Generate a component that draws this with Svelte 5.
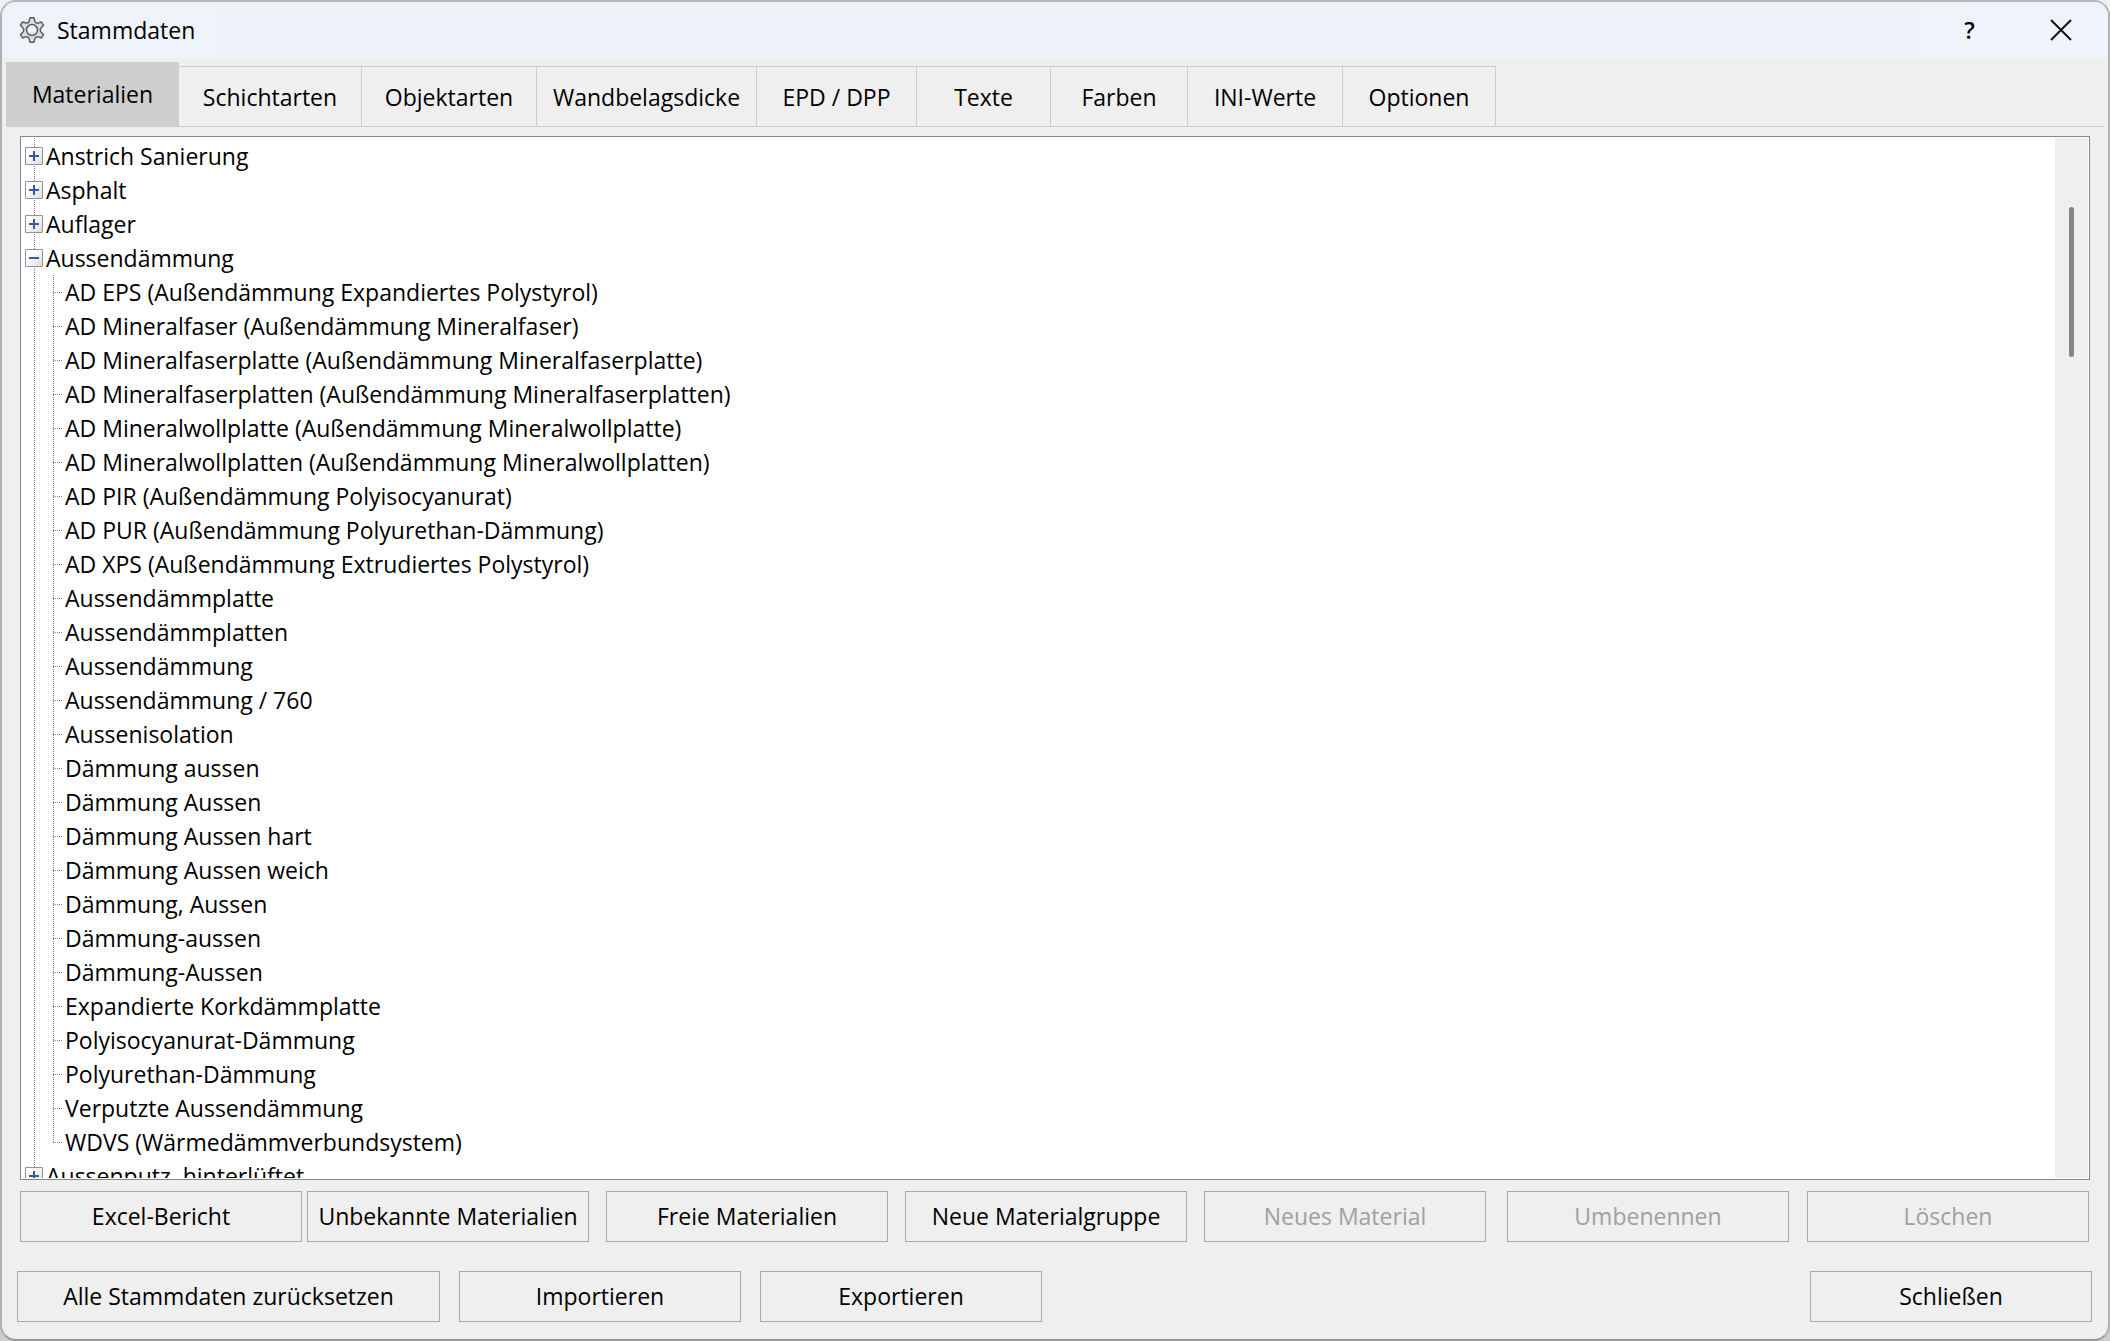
<script lang="ts">
    type Group = {
        name: string;
        open: boolean;
        items: string[];
    };

    type Action = {
        label: string;
        disabled?: boolean;
    };

    const tabs = [
        'Materialien',
        'Schichtarten',
        'Objektarten',
        'Wandbelagsdicke',
        'EPD / DPP',
        'Texte',
        'Farben',
        'INI-Werte',
        'Optionen',
    ];

    let activeTab = $state('Materialien');

    let groups = $state<Group[]>([
        { name: 'Anstrich Sanierung', open: false, items: [] },
        { name: 'Asphalt', open: false, items: [] },
        { name: 'Auflager', open: false, items: [] },
        {
            name: 'Aussendämmung',
            open: true,
            items: [
                'AD EPS (Außendämmung Expandiertes Polystyrol)',
                'AD Mineralfaser (Außendämmung Mineralfaser)',
                'AD Mineralfaserplatte (Außendämmung Mineralfaserplatte)',
                'AD Mineralfaserplatten (Außendämmung Mineralfaserplatten)',
                'AD Mineralwollplatte (Außendämmung Mineralwollplatte)',
                'AD Mineralwollplatten (Außendämmung Mineralwollplatten)',
                'AD PIR (Außendämmung Polyisocyanurat)',
                'AD PUR (Außendämmung Polyurethan-Dämmung)',
                'AD XPS (Außendämmung Extrudiertes Polystyrol)',
                'Aussendämmplatte',
                'Aussendämmplatten',
                'Aussendämmung',
                'Aussendämmung / 760',
                'Aussenisolation',
                'Dämmung aussen',
                'Dämmung Aussen',
                'Dämmung Aussen hart',
                'Dämmung Aussen weich',
                'Dämmung, Aussen',
                'Dämmung-aussen',
                'Dämmung-Aussen',
                'Expandierte Korkdämmplatte',
                'Polyisocyanurat-Dämmung',
                'Polyurethan-Dämmung',
                'Verputzte Aussendämmung',
                'WDVS (Wärmedämmverbundsystem)',
            ],
        },
        { name: 'Aussenputz, hinterlüftet', open: false, items: [] },
    ]);

    // Buttons that belong together share one cluster
    const materialActions: Action[][] = [
        [{ label: 'Excel-Bericht' }, { label: 'Unbekannte Materialien' }],
        [{ label: 'Freie Materialien' }],
        [{ label: 'Neue Materialgruppe' }],
        [{ label: 'Neues Material', disabled: true }],
        [{ label: 'Umbenennen', disabled: true }, { label: 'Löschen', disabled: true }],
    ];
</script>

<div class="window">
    <header>
        <svg class="gear" viewBox="0 0 26 26" aria-hidden="true">
            <path d="M11 .8h4l.9 3.600q.2.800 1 1.200l.6.350q.7.400 1.500.2l3.500-1.100 2 3.500-2.600 2.500q-.6.600-.6 1.400v1.100q0 .8.600 1.400l2.600 2.500-2 3.500-3.500-1.100q-.8-.2-1.500.2l-.6.350q-.8.400-1 1.200l-.9 3.600h-4l-.9-3.600q-.2-.8-1-1.200l-.6-.35q-.7-.4-1.500-.2l-3.500 1.100-2-3.500 2.600-2.500q.6-.6.600-1.400v-1.100q0-.8-.6-1.400L1.500 8.450l2-3.500L7 6.050q.8.200 1.500-.2l.6-.35q.8-.4 1-1.200z" />
            <circle cx="13" cy="13" r="5.500" />
        </svg>
        <h1>Stammdaten</h1>
        <button class="caption" aria-label="Hilfe">?</button>
        <button class="caption" aria-label="Fenster schließen">
            <svg viewBox="0 0 22 22" aria-hidden="true"><path d="M1 1l20 20M21 1L1 21" /></svg>
        </button>
    </header>

    <div class="tabs" role="tablist">
        {#each tabs as tab}
            <button
                role="tab"
                class:active={tab === activeTab}
                aria-selected={tab === activeTab}
                onclick={() => (activeTab = tab)}
            >{tab}</button>
        {/each}
    </div>

    <main>
        <div class="tree-frame">
            <ul class="tree">
                {#each groups as group}
                    <li>
                        <div class="row">
                            <button
                                class="toggle"
                                aria-label={group.name}
                                aria-expanded={group.open}
                                onclick={() => (group.open = !group.open)}
                            >
                                <svg viewBox="0 0 18 18" aria-hidden="true">
                                    <path d={group.open ? 'M4 9h10' : 'M4 9h10M9 4v10'} />
                                </svg>
                            </button>
                            <span>{group.name}</span>
                        </div>
                        {#if group.open}
                            <ul class="items">
                                {#each group.items as item}
                                    <li>{item}</li>
                                {/each}
                            </ul>
                        {/if}
                    </li>
                {/each}
            </ul>
            <div class="scrollbar"><div class="thumb"></div></div>
        </div>

        <div class="actions">
            {#each materialActions as cluster}
                <div class="cluster">
                    {#each cluster as action}
                        <button class="push" disabled={action.disabled}>{action.label}</button>
                    {/each}
                </div>
            {/each}
        </div>
    </main>

    <footer>
        <button class="push wide">Alle Stammdaten zurücksetzen</button>
        <button class="push">Importieren</button>
        <button class="push">Exportieren</button>
        <button class="push close">Schließen</button>
    </footer>
</div>

<style>
    :global(body) {
        background: linear-gradient(#f0f0f0, #cccccc);
    }

    .window {
        box-sizing: border-box;
        display: flex;
        flex-direction: column;
        height: 100vh;
        border: 2px solid;
        border-color: #b8b8b8 #b0b0b0 #999999;
        border-radius: 16px;
        overflow: hidden;
        background: #efefef;
        color: #000;
        font: 23px "Open Sans", "Noto Sans", sans-serif;
    }

    button {
        box-sizing: border-box;
        padding: 0;
        border: none;
        background: none;
        color: inherit;
        font: inherit;
    }

    ul {
        margin: 0;
        padding: 0;
        list-style: none;
    }

    header {
        display: flex;
        align-items: center;
        height: 56px;
        padding: 0 2px 0 17px;
        background: linear-gradient(90deg, #eff3fb, #edf3f8 25%, #edf3f8 85%, #eff3fb 95%);
    }

    h1 {
        flex: 1;
        margin: 0 0 0 12px;
        font-size: 23px;
        font-weight: normal;
    }

    .gear {
        width: 26px;
        height: 26px;
        fill: #dcdcdc;
        stroke: #5c5c5c;
        stroke-width: 1.5;
        stroke-linejoin: round;
    }

    .gear circle {
        fill: #eff3fb;
    }

    .caption {
        display: flex;
        align-items: center;
        justify-content: center;
        width: 91px;
        height: 56px;
        font-weight: 600;
    }

    .caption svg {
        width: 22px;
        height: 22px;
        fill: none;
        stroke: #111;
        stroke-width: 2;
    }

    .tabs {
        display: grid;
        grid-template-columns: 173px 183px 175px 220px 160px 134px 137px 155px 153px;
        align-items: end;
        margin: 4px 4px 0;
        border-bottom: 1px solid #cccccc;
    }

    .tabs button {
        height: 60px;
        border: solid #cccccc;
        border-width: 1px 1px 0 0;
    }

    .tabs .active {
        height: 64px;
        border: none;
        background: #cecece;
    }

    main {
        display: flex;
        flex: 1;
        flex-direction: column;
        min-height: 0;
        padding: 9px 18px 0;
    }

    .tree-frame {
        display: flex;
        flex: 1;
        min-height: 0;
        padding: 1px;
        border: 1px solid #828790;
        background: #fff;
    }

    .tree {
        flex: 1;
        padding-top: 1px;
        overflow: hidden;
        line-height: 34px;
        white-space: nowrap;
        /* dotted guide line that runs through the toggles */
        background: repeating-linear-gradient(#808080 0 1px, transparent 1px 2px) 12px 0 / 1px 100% no-repeat;
    }

    .row {
        display: flex;
        align-items: center;
        gap: 3px;
        height: 34px;
        padding-left: 3px;
    }

    .toggle {
        width: 18px;
        height: 18px;
        border: 1px solid #919191;
        border-radius: 1px;
        background: linear-gradient(135deg, #ffffff 30%, #dcdcdc);
    }

    .toggle svg {
        display: block;
        width: 18px;
        height: 18px;
        margin: -1px;
        fill: none;
        stroke: #3a56a0;
        stroke-width: 2;
    }

    .items {
        margin-left: 31px;
    }

    .items li {
        height: 34px;
        padding-left: 12px;
        background:
            repeating-linear-gradient(#808080 0 1px, transparent 1px 2px) 0 0 / 1px 100% no-repeat,
            repeating-linear-gradient(90deg, #808080 0 1px, transparent 1px 2px) 0 17px / 9px 1px no-repeat;
    }

    .items li:last-child {
        background-size: 1px 17px, 9px 1px;
    }

    .scrollbar {
        width: 33px;
        padding-top: 69px;
        background: #efefef;
    }

    .thumb {
        width: 5px;
        height: 150px;
        margin-left: 14px;
        border-radius: 3px;
        background: #858585;
    }

    .actions {
        display: flex;
        gap: 17px;
        padding: 11px 1px 0 0;
    }

    .cluster {
        display: flex;
        gap: 5px;
    }

    .cluster:last-child {
        gap: 18px;
        margin-left: auto;
    }

    .push {
        width: 282px;
        height: 51px;
        padding-bottom: 2px;
        border: 1px solid #a9a9a9;
        white-space: nowrap;
    }

    .push:disabled {
        color: #a0a0a0;
    }

    footer {
        display: flex;
        gap: 19px;
        padding: 29px 16px 17px 15px;
    }

    .wide {
        width: 423px;
    }

    .close {
        margin-left: auto;
    }
</style>
